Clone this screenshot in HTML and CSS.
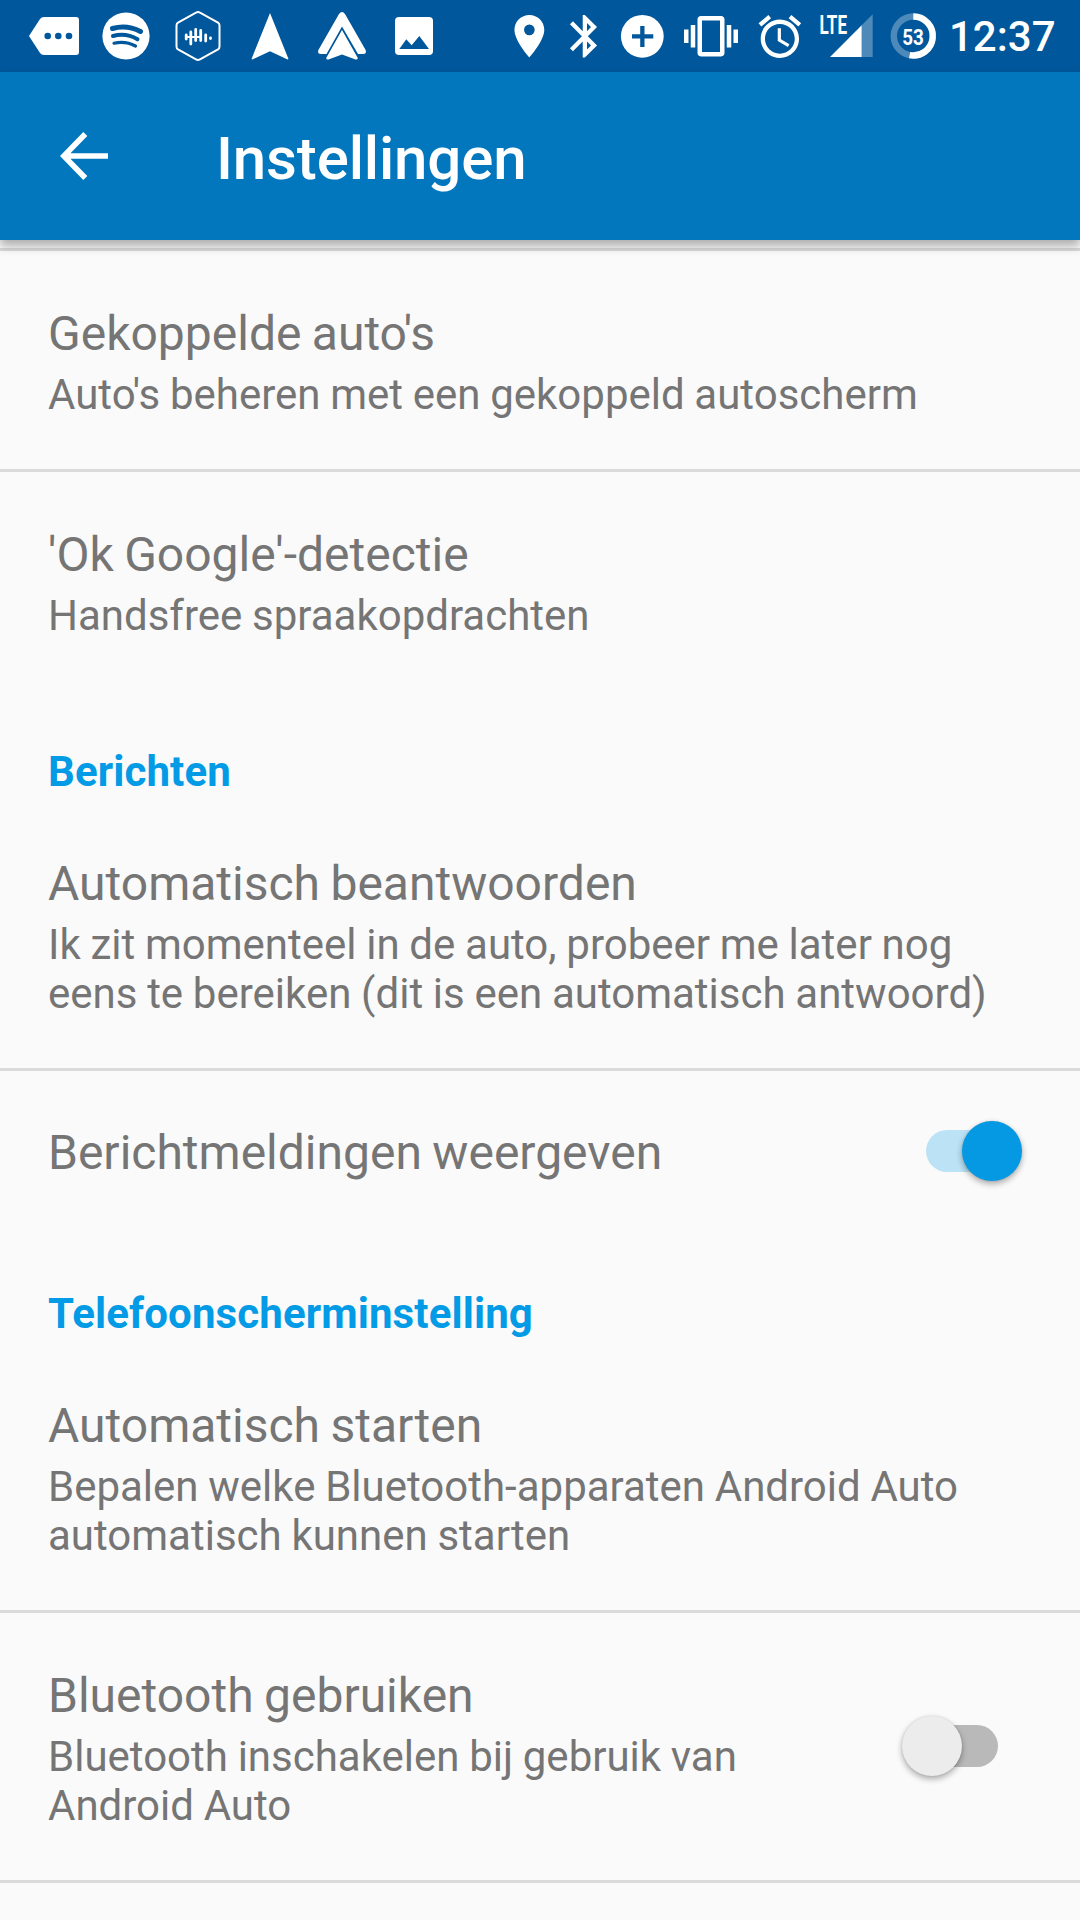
FILE: index.html
```html
<!DOCTYPE html>
<html lang="nl">
<head>
<meta charset="utf-8">
<title>Instellingen</title>
<link rel="stylesheet" href="styles.css">
</head>
<body>
<div class="statusbar">
  <div class="icons">
    <svg width="60" height="72" viewBox="24 0 60 72"><path fill="#fff" d="M29 36L40 19Q41.500 17 44 17H76Q79 17 79 20V52Q79 55 76 55H44Q41.500 55 40 53Z"/><g class="cut"><circle cx="47.700" cy="36" r="3.300"/><circle cx="58.300" cy="36" r="3.300"/><circle cx="69" cy="36" r="3.300"/></g></svg>
    <svg width="76" height="72" viewBox="84 0 76 72"><circle cx="126" cy="36" r="23.600" fill="#fff"/><g class="cut-line"><path stroke-width="5" d="M112.500 28.500Q127 24.500 140.500 31.500"/><path stroke-width="4" d="M113 36Q126 32.500 137.500 39.300"/><path stroke-width="3.200" d="M114 43.200Q125.500 40.500 135.500 46"/></g></svg>
    <svg width="80" height="72" viewBox="160 0 80 72"><g class="line"><path stroke-width="2" d="M196 12.600Q198 11.400 200 12.600L218 22.600Q219.500 23.500 219.500 25.500V46.500Q219.500 48.500 218 49.400L200 59.400Q198 60.600 196 59.400L178 49.400Q176.500 48.500 176.500 46.500V25.500Q176.500 23.500 178 22.600Z"/><path stroke-width="2.800" d="M186.200 35V39M190.800 32V44M195.700 29.500V40.500M200.700 30.500V40.500M205.700 35V41M210.500 37.800V38.600"/><path stroke-width="2" d="M186 37H200.500"/></g></svg>
    <svg width="70" height="72" viewBox="240 0 70 72"><path fill="#fff" d="M270 13L288.500 59L287.600 59.400L270 51.200L252.400 59.400L251.500 59Z"/></svg>
    <svg width="70" height="72" viewBox="310 0 70 72"><path fill="#fff" d="M339 14Q342 10 345 14L365.600 50Q367 54 363 54H358L342 26.500L326.500 54H321Q317 54 318.400 50Z"/><path fill="#fff" d="M342 30L357.800 58Q357.500 60 355.500 59.500L342 54.500L328.500 59.500Q326.500 60 326.200 58Z"/></svg>
    <svg width="60" height="72" viewBox="380 0 60 72"><rect x="395" y="17" width="38" height="38" rx="4" fill="#fff"/><path class="cut" d="M399.300 49L406.300 39.300L411.700 45.300L419.300 36L429 49Z"/></svg>
  </div>
  <div class="icons">
    <svg width="56" height="72" viewBox="500 0 56 72"><path fill="#fff" transform="translate(503.800 10.700) scale(2.130)" d="M12 2C8.130 2 5 5.130 5 9c0 5.250 7 13 7 13s7-7.750 7-13c0-3.870-3.130-7-7-7zm0 9.500a2.500 2.500 0 0 1 0-5 2.500 2.500 0 0 1 0 5z"/></svg>
    <svg width="54" height="72" viewBox="556 0 54 72"><path fill="#fff" transform="translate(559.300 10.700) scale(2.130)" d="M17.710 7.710L12 2h-1v7.590L6.410 5 5 6.410 10.590 12 5 17.590 6.410 19 11 14.410V22h1l5.710-5.710-4.300-4.290 4.300-4.290zM13 5.830l1.880 1.880L13 9.590V5.830zm1.880 10.460L13 18.170v-3.760l1.880 1.880z"/></svg>
    <svg width="65" height="72" viewBox="610 0 65 72"><circle cx="642.300" cy="36.300" r="21.400" fill="#fff"/><path class="cut" d="M640.200 26h4.300v8.300h8.800v4.300h-8.800v8.400h-4.300v-8.400H632v-4.300h8.200z"/></svg>
    <svg width="75" height="72" viewBox="675 0 75 72"><path fill="#fff" transform="translate(684 9.200) scale(2.250)" d="M0 15h2V9H0v6zm3 2h2V7H3v10zm19-8v6h2V9h-2zm-3 8h2V7h-2v10zM16.500 3h-9C6.670 3 6 3.670 6 4.500v15c0 .83.67 1.500 1.500 1.500h9c.83 0 1.500-.67 1.500-1.500v-15c0-.83-.67-1.500-1.500-1.500zM16 19H8V5h8v14z"/></svg>
    <svg width="62" height="72" viewBox="750 0 62 72"><path fill="#fff" transform="translate(754.300 11.100) scale(2.130)" d="M22 5.720l-4.600-3.860-1.290 1.530 4.600 3.860L22 5.720zM7.880 3.390L6.600 1.860 2 5.710l1.290 1.530 4.590-3.850zM12.500 8H11v6l4.750 2.850.75-1.230-4-2.370V8zM12 4c-4.970 0-9 4.030-9 9s4.020 9 9 9c4.970 0 9-4.030 9-9s-4.030-9-9-9zm0 16c-3.870 0-7-3.130-7-7s3.130-7 7-7 7 3.130 7 7-3.130 7-7 7z"/></svg>
    <svg width="70" height="72" viewBox="812 0 70 72"><path fill="#fff" fill-opacity=".3" d="M861.700 25.300L872.700 14.300V57H861.700Z"/><path fill="#fff" d="M830 57L861.700 25.300V57Z"/><text class="lte" x="819.500" y="33.500" textLength="27.500" lengthAdjust="spacingAndGlyphs">LTE</text></svg>
    <svg width="67" height="72" viewBox="882 0 67 72"><g fill="none" stroke="#fff" stroke-width="6.400"><circle cx="913.300" cy="36" r="19.500" stroke-opacity=".3"/><path d="M913.300 16.500A19.500 19.500 0 1 1 909.600 55.150"/></g><text class="level" x="902.200" y="45" textLength="21.600" lengthAdjust="spacingAndGlyphs">53</text></svg>
    <span class="clock">12:37</span>
  </div>
</div>
<header class="appbar">
  <svg class="back" width="48" height="48" viewBox="0 0 48 48"><path fill="none" stroke="#fff" stroke-width="5.600" d="M25.300 2L3.800 24L25.300 46M4 24H48"/></svg>
  <h1>Instellingen</h1>
</header>
<main>
  <section class="first">
    <div class="row"><div class="text"><h3>Gekoppelde auto's</h3><p>Auto's beheren met een gekoppeld autoscherm</p></div></div>
    <div class="row"><div class="text"><h3>'Ok Google'-detectie</h3><p>Handsfree spraakopdrachten</p></div></div>
  </section>
  <section>
    <h2>Berichten</h2>
    <div class="row"><div class="text"><h3>Automatisch beantwoorden</h3><p>Ik zit momenteel in de auto, probeer me later nog eens te bereiken (dit is een automatisch antwoord)</p></div></div>
    <div class="row switchable single"><div class="text"><h3>Berichtmeldingen weergeven</h3></div><div class="switch on"><span class="thumb"></span></div></div>
  </section>
  <section>
    <h2>Telefoonscherminstelling</h2>
    <div class="row"><div class="text"><h3>Automatisch starten</h3><p>Bepalen welke Bluetooth-apparaten Android Auto automatisch kunnen starten</p></div></div>
    <div class="row switchable"><div class="text"><h3>Bluetooth gebruiken</h3><p>Bluetooth inschakelen bij gebruik van Android Auto</p></div><div class="switch"><span class="thumb"></span></div></div>
    <div class="row"></div>
  </section>
</main>
</body>
</html>
```
FILE: styles.css
```css
* { box-sizing: border-box; margin: 0; padding: 0; }
body {
  height: 1920px;
  overflow: hidden;
  display: flex;
  flex-direction: column;
  background: #fafafa;
  color: #757575;
  font-family: Roboto, sans-serif;
}
svg { display: block; flex: none; }
.statusbar {
  flex: none;
  height: 72px;
  padding: 0 24px;
  display: flex;
  justify-content: space-between;
  background: #01579b;
  color: #fff;
}
.icons { display: flex; }
.icons + .icons { width: 556px; }
.cut { fill: #01579b; }
.cut-line { fill: none; stroke: #01579b; stroke-linecap: round; }
.line { fill: none; stroke: #fff; stroke-linecap: round; stroke-linejoin: round; }
.lte { font-size: 26px; font-weight: 700; fill: #fff; }
.level { font-size: 21.5px; font-weight: 700; fill: #fff; }
.clock { font-size: 42px; font-weight: 500; line-height: 74px; white-space: nowrap; }
.appbar {
  flex: none;
  height: 168px;
  padding: 0 60px;
  display: flex;
  align-items: center;
  gap: 108px;
  background: #0277bd;
  color: #fff;
  box-shadow: 0 6px 9px rgba(0, 0, 0, .3);
  z-index: 1;
}
.appbar h1 {
  font-size: 60px;
  font-weight: 500;
  line-height: 72px;
  letter-spacing: -.15px;
  padding-top: 6px;
}
main { flex: none; }
.first { padding-top: 8px; }
.first .row:first-child { border-top: 3px solid #dadada; }
.row { padding: 54px 48px 50px; display: flex; }
.row + .row { border-top: 3px solid #dadada; }
.text { flex: 1; }
.switchable { padding-right: 58px; align-items: center; gap: 48px; }
.single { padding-top: 50px; padding-bottom: 49px; }
h3 { font-size: 48px; font-weight: 400; line-height: 57px; word-spacing: -1.5px; }
p { font-size: 42px; line-height: 49px; padding-top: 8px; word-spacing: -.7px; }
h2 {
  height: 111px;
  padding: 57px 48px 5px;
  color: #039be5;
  font-size: 42px;
  font-weight: 700;
  line-height: 49px;
  letter-spacing: .12px;
}
.switch {
  flex: none;
  width: 120px;
  height: 60px;
  margin-bottom: 5px;
  display: flex;
  align-items: center;
  position: relative;
}
.switch::before {
  content: "";
  position: absolute;
  left: 24px;
  top: 9px;
  width: 72px;
  height: 42px;
  border-radius: 21px;
  background: #b9b9b9;
}
.switch.on { justify-content: flex-end; margin-bottom: 2px; }
.switch.on::before { background: #bbe2f5; }
.thumb {
  position: relative;
  width: 60px;
  height: 60px;
  border-radius: 50%;
  background: #ececec;
  box-shadow: 0 3px 6px rgba(0, 0, 0, .32), 0 0 2px rgba(0, 0, 0, .12);
}
.on .thumb { background: #0499e2; }
```
